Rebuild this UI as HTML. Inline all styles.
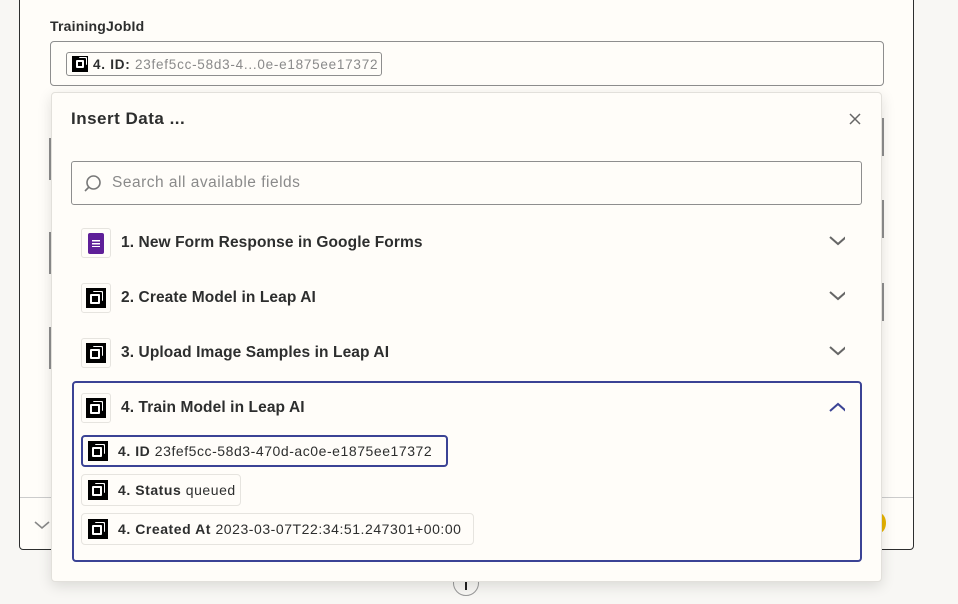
<!DOCTYPE html>
<html><head><style>
*{box-sizing:border-box;margin:0;padding:0}
body{width:958px;height:604px;overflow:hidden;background:#f8f7f4;font-family:"Liberation Sans",sans-serif;color:#2d2e2e;position:relative}
.card{position:absolute;left:19px;top:-10px;width:895px;height:560px;background:#fffdf9;border:1px solid #2d2e2e;border-radius:4px}
.abs{position:absolute}
.logo{display:inline-block;background:#000;position:relative;flex:none}
.logo:after{content:"";position:absolute;left:22%;top:28%;width:50%;height:50%;border:2px solid #fff;border-radius:1px;box-sizing:border-box;box-shadow:2px -2px 0 0 #000,3px -3px 0 0 #fff}
.ibox{position:absolute;width:30px;height:30px;border:1px solid #e6e4df;border-radius:3px;background:#fffdf9;display:flex;align-items:center;justify-content:center}
.row{position:absolute;left:121px;font-size:15.5px;font-weight:bold;color:#2d2e2e;letter-spacing:0.1px}
.chev{position:absolute;left:829px;width:16px;height:10px}
.pill{position:absolute;left:81px;height:32px;border:1px solid #e6e4df;border-radius:4px;background:#fffdf9;font-size:14px;letter-spacing:0.55px;display:flex;align-items:center;padding-left:6px;white-space:nowrap}
.pill .logo{width:20px;height:20px;margin-right:10px}
</style></head><body>
<div class="card"></div>
<div class="abs" style="left:50px;top:18px;font-size:14px;font-weight:bold;color:#2d2e2e;letter-spacing:0.2px">TrainingJobId</div>
<div class="abs" style="left:50px;top:41px;width:834px;height:45px;border:1px solid #8e8e8e;border-radius:4px;background:#fffdf9"></div>
<div class="abs" style="left:66px;top:52px;width:316px;height:24px;border:1px solid #8e8e8e;border-radius:3px;font-size:13.5px;letter-spacing:0.75px;display:flex;align-items:center;padding-left:5px;white-space:nowrap"><span class="logo" style="width:16px;height:16px;margin-right:5px"></span><b>4. ID:</b>&nbsp;<span style="color:#8a8a8a">23fef5cc-58d3-4...0e-e1875ee17372</span></div>
<div class="abs" style="left:49px;top:138px;width:2px;height:42px;background:#8e8e8e"></div>
<div class="abs" style="left:49px;top:232px;width:2px;height:42px;background:#8e8e8e"></div>
<div class="abs" style="left:49px;top:327px;width:2px;height:42px;background:#8e8e8e"></div>
<div class="abs" style="left:882px;top:118px;width:2px;height:38px;background:#8e8e8e"></div>
<div class="abs" style="left:882px;top:200px;width:2px;height:38px;background:#8e8e8e"></div>
<div class="abs" style="left:882px;top:283px;width:2px;height:38px;background:#8e8e8e"></div>
<div class="abs" style="left:20px;top:497px;width:893px;height:1px;background:#ccc"></div>
<svg class="abs" style="left:34px;top:520px" width="16" height="10"><path d="M1 2 L8 8 L15 2" stroke="#888" stroke-width="1.6" fill="none"/></svg>
<div class="abs" style="left:872px;top:513px;width:14px;height:20px;border-radius:50%;background:#e8b400"></div>
<div class="abs" style="left:453px;top:570px;width:26px;height:26px;border-radius:50%;border:1px solid #999;background:#f8f7f4"></div>
<div class="abs" style="left:465px;top:578px;width:2px;height:12px;background:#222"></div>
<div class="abs" style="left:51px;top:92px;width:831px;height:490px;background:#fffdf9;border:1px solid #e2e0db;border-radius:4px;box-shadow:0 4px 14px rgba(0,0,0,0.12)"></div>
<div class="abs" style="left:71px;top:109px;font-size:17px;font-weight:bold;letter-spacing:0.5px">Insert Data ...</div>
<svg class="abs" style="left:849px;top:113px" width="12" height="12"><path d="M1 1L11 11M11 1L1 11" stroke="#666" stroke-width="1.5"/></svg>
<div class="abs" style="left:71px;top:161px;width:791px;height:44px;border:1px solid #8e8e8e;border-radius:3px"></div>
<svg class="abs" style="left:82px;top:173px" width="22" height="22"><circle cx="11.5" cy="9.5" r="6.5" stroke="#777" stroke-width="1.6" fill="none"/><path d="M7 14L3 18" stroke="#777" stroke-width="1.6"/></svg>
<div class="abs" style="left:112px;top:174px;font-size:15.5px;color:#8a8a8a;letter-spacing:0.5px">Search all available fields</div>
<div class="ibox" style="left:81px;top:228px"><div style="width:16px;height:21px;background:#5e1f98;border-radius:2px;position:relative"><div style="position:absolute;left:4px;top:7px;width:8px;height:7px;background:repeating-linear-gradient(#fff 0 1.5px,transparent 1.5px 3px)"></div></div></div>
<div class="row" style="top:234px">1. New Form Response in Google Forms</div>
<svg class="chev" style="top:236px" width="18" height="10"><path d="M1 1L9 8L17 1" stroke="#666" stroke-width="2" fill="none"/></svg>
<div class="ibox" style="left:81px;top:283px"><span class="logo" style="width:20px;height:20px"></span></div>
<div class="row" style="top:289px">2. Create Model in Leap AI</div>
<svg class="chev" style="top:291px" width="18" height="10"><path d="M1 1L9 8L17 1" stroke="#666" stroke-width="2" fill="none"/></svg>
<div class="ibox" style="left:81px;top:338px"><span class="logo" style="width:20px;height:20px"></span></div>
<div class="row" style="top:344px">3. Upload Image Samples in Leap AI</div>
<svg class="chev" style="top:346px" width="18" height="10"><path d="M1 1L9 8L17 1" stroke="#666" stroke-width="2" fill="none"/></svg>
<div class="abs" style="left:72px;top:381px;width:790px;height:181px;border:2px solid #3b4395;border-radius:4px"></div>
<div class="ibox" style="left:81px;top:393px"><span class="logo" style="width:20px;height:20px"></span></div>
<div class="row" style="top:399px">4. Train Model in Leap AI</div>
<svg class="chev" style="top:402px" width="18" height="10"><path d="M1 9L9 2L17 9" stroke="#3b4395" stroke-width="2" fill="none"/></svg>
<div class="pill" style="top:435px;width:367px;border:2px solid #3b4395;padding-left:5px"><span class="logo"></span><b>4. ID</b>&nbsp;23fef5cc-58d3-470d-ac0e-e1875ee17372</div>
<div class="pill" style="top:474px;width:160px"><span class="logo"></span><b>4. Status</b>&nbsp;queued</div>
<div class="pill" style="top:513px;width:393px"><span class="logo"></span><b>4. Created At</b>&nbsp;2023-03-07T22:34:51.247301+00:00</div>
</body></html>
